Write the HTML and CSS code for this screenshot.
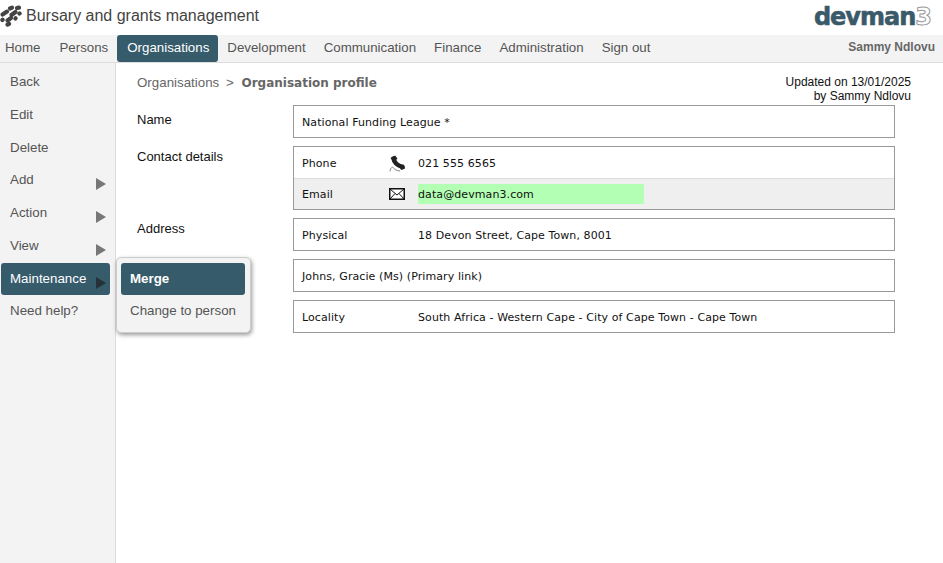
FILE: index.html
```html
<!DOCTYPE html>
<html lang="en">
<head>
  <meta charset="UTF-8" />
  <title>Organisation profile</title>
  <link rel="stylesheet" href="styles.css">
</head>
<body>
  <header class="topbar">
    <div class="brand">
      <svg class="brand-icon" viewBox="0 0 22 22" width="22" height="22">
        <g fill="none" stroke="#444" stroke-width="4.2" stroke-linecap="round">
          <path d="M10 3.5 L12 2.6" />
          <path d="M17 3 L19 2.6" />
          <path d="M2.6 9.5 L7 6.6" />
          <path d="M11.5 10 L15.5 7" />
          <path d="M19.4 8.6 L19.6 8.4" />
          <path d="M2.4 15 L2.6 14.8" />
          <path d="M7.5 15.5 L11 13" />
          <path d="M15.4 13.4 L15.6 13.2" />
          <path d="M7.5 19.6 L9 18.8" />
        </g>
      </svg>
      <span>Bursary and grants management</span>
    </div>
    <div class="logo">devman<span class="logo-three">3</span></div>
  </header>

  <nav class="mainnav">
    <a href="#">Home</a>
    <a href="#">Persons</a>
    <a href="#" class="active">Organisations</a>
    <a href="#">Development</a>
    <a href="#">Communication</a>
    <a href="#">Finance</a>
    <a href="#">Administration</a>
    <a href="#">Sign out</a>
    <span class="user">Sammy Ndlovu</span>
  </nav>

  <div class="page">
    <aside class="sidebar">
      <a href="#">Back</a>
      <a href="#">Edit</a>
      <a href="#">Delete</a>
      <a href="#" class="has-sub">Add</a>
      <a href="#" class="has-sub">Action</a>
      <a href="#" class="has-sub">View</a>
      <a href="#" class="has-sub active">Maintenance</a>
      <a href="#">Need help?</a>
    </aside>

    <div class="submenu">
      <a href="#" class="active">Merge</a>
      <a href="#">Change to person</a>
    </div>

    <main class="content">
      <div class="content-head">
        <div class="crumbs">Organisations <span class="sep">&gt;</span> <b>Organisation profile</b></div>
        <div class="updated">Updated on 13/01/2025<br>by Sammy Ndlovu</div>
      </div>

      <div class="profile">
        <div class="field-label first">Name</div>
        <div class="box"><div class="row">National Funding League *</div></div>

        <div class="field-label">Contact details</div>
        <div class="box">
          <div class="row">
            <span class="key short">Phone</span>
            <svg class="row-icon" viewBox="0 0 16 17" width="16" height="17">
              <path fill="none" stroke="#222" stroke-width="4.5" stroke-linecap="round" d="M4.5 3.5 C5 7 8.5 10.5 13.5 12" />
              <path fill="#222" d="M1.5 3 L6 0.5 L8.5 3.5 L5 7 Z M10.5 11 L14.5 9.5 L16 13.5 L12 15 Z" />
              <path fill="none" stroke="#888" d="M3.5 12 C2 12.5 1.2 14.5 1 16.5 M3.5 12 C5.5 14.5 8 16 11 16" />
            </svg>
            <span class="val">021 555 6565</span>
          </div>
          <div class="row shaded">
            <span class="key short">Email</span>
            <svg class="row-icon" viewBox="0 0 16 12" width="16" height="12">
              <rect x="0.75" y="0.75" width="14.5" height="10.5" fill="#fff" stroke="#111" stroke-width="1.5" />
              <path fill="none" stroke="#111" d="M1 1 L8 7 L15 1 M1 11 L6 5.5 M15 11 L10 5.5" />
            </svg>
            <span class="val mail">data@devman3.com</span>
          </div>
        </div>

        <div class="field-label">Address</div>
        <div class="box">
          <div class="row"><span class="key">Physical</span><span class="val">18 Devon Street, Cape Town, 8001</span></div>
        </div>

        <div class="field-label"></div>
        <div class="box"><div class="row">Johns, Gracie (Ms) (Primary link)</div></div>

        <div class="field-label"></div>
        <div class="box">
          <div class="row"><span class="key">Locality</span><span class="val">South Africa - Western Cape - City of Cape Town - Cape Town</span></div>
        </div>
      </div>
    </main>
  </div>
</body>
</html>
```

FILE: styles.css
```css
* {
  box-sizing: border-box;
}

html, body {
  height: 100%;
}

body {
  margin: 0;
  font-family: "Liberation Sans", Arial, sans-serif;
  font-size: 13.33px;
  color: #111;
  background: #fff;
  display: flex;
  flex-direction: column;
  overflow: hidden;
}

a {
  text-decoration: none;
  color: #555;
}

.topbar {
  height: 35px;
  display: flex;
  justify-content: space-between;
  align-items: center;
  padding: 0 12px 4px 0;
  flex: none;
}

.brand {
  display: flex;
  align-items: center;
  gap: 4px;
  font-size: 16px;
  color: #444;
}

.logo {
  font-family: "DejaVu Sans", Verdana, sans-serif;
  font-weight: bold;
  font-size: 24px;
  letter-spacing: -1px;
  color: #3a5a6a;
  -webkit-text-stroke: 0.6px #3a5a6a;
  line-height: 1;
  margin-top: 2px;
}

.logo-three {
  color: #fff;
  -webkit-text-stroke: 1px #999;
}

.mainnav {
  height: 28px;
  flex: none;
  display: flex;
  align-items: stretch;
  background: #f3f3f3;
  border-bottom: 1px solid #ddd;
  padding-right: 8px;
  font-size: 13.3px;
}

.mainnav a {
  padding: 0 9px;
  line-height: 25px;
}

.mainnav a:first-child {
  padding: 0 10px 0 5px;
}

.mainnav a.active {
  background: #365b6b;
  color: #fff;
  padding: 0 9px 0 10px;
  border-radius: 3px;
  height: 27px;
}

.user {
  margin-left: auto;
  font-size: 12px;
  font-weight: bold;
  color: #666;
  line-height: 24px;
}

.page {
  flex: 1;
  display: flex;
  position: relative;
  min-height: 0;
}

.sidebar {
  width: 116px;
  flex: none;
  background: #f3f3f3;
  border-right: 1px solid #ddd;
  padding: 3.4px 5px 0 1px;
}

.sidebar a {
  display: block;
  height: 32.7px;
  line-height: 31px;
  padding-left: 9px;
  border-radius: 3px;
  position: relative;
}

.sidebar .has-sub::after {
  content: "";
  position: absolute;
  right: 4px;
  top: 14px;
  border-left: 10px solid #777;
  border-top: 6px solid transparent;
  border-bottom: 6px solid transparent;
}

.sidebar a.active {
  background: #365b6b;
  color: #fff;
}

.sidebar a.active::after {
  border-left-color: #263238;
}

.submenu {
  position: absolute;
  left: 116px;
  top: 194px;
  width: 135px;
  height: 76px;
  padding: 5px 5px 0 4px;
  background: #f3f3f3;
  border: 1px solid #ccc;
  border-radius: 5px;
  box-shadow: 1px 2px 4px rgba(0, 0, 0, 0.4);
}

.submenu a {
  display: block;
  height: 32px;
  line-height: 31px;
  padding-left: 9px;
  border-radius: 3px;
}

.submenu a.active {
  background: #365b6b;
  color: #fff;
  font-weight: bold;
}

.content {
  flex: 1;
  padding: 10px 32px 0 21px;
  border-radius: 4px 0 0 0;
}

.content-head {
  display: flex;
  justify-content: space-between;
  height: 32px;
}

.crumbs {
  color: #666;
  padding-top: 2px;
}

.crumbs .sep {
  margin: 0 3px;
}

.crumbs b {
  font-family: "DejaVu Sans", Verdana, sans-serif;
  font-size: 12px;
  margin-left: 1px;
  color: #666;
}

.updated {
  font-size: 12px;
  line-height: 14px;
  text-align: right;
  padding-top: 2px;
}

.profile {
  display: grid;
  grid-template-columns: 156px 602px;
  row-gap: 8px;
}

.field-label {
  font-size: 13px;
  padding-top: 3px;
}

.field-label.first {
  padding-top: 7px;
}

.box {
  border: 1px solid #999;
  font-family: "DejaVu Sans", Verdana, sans-serif;
  font-size: 11px;
  letter-spacing: 0.09px;
}

.row {
  display: flex;
  align-items: center;
  height: 31px;
  padding: 1px 0 0 8px;
}

.row.shaded {
  background: #efefef;
  border-top: 1px solid #ddd;
  padding-top: 0;
}

.key {
  width: 116px;
  flex: none;
}

.key.short {
  width: 87px;
}

.row-icon {
  flex: none;
  margin-right: 13px;
}

.mail {
  background: #b3ffb3;
  width: 226px;
  height: 20px;
  line-height: 21px;
}
```
